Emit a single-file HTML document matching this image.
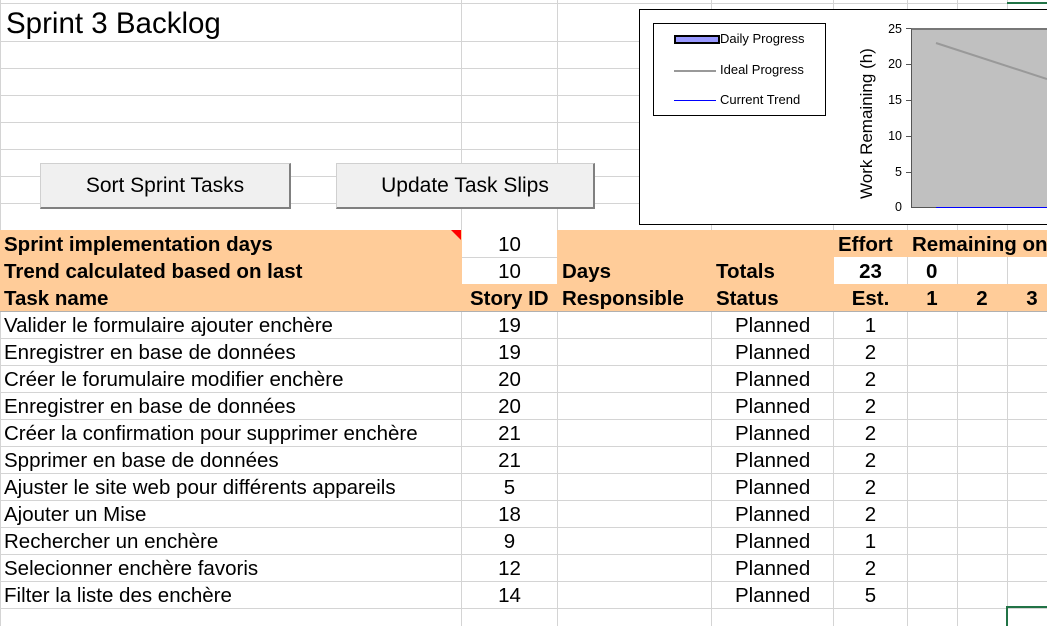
<!DOCTYPE html>
<html><head><meta charset="utf-8"><style>
body{margin:0;width:1047px;height:626px;overflow:hidden;background:#fff;position:relative;font-family:"Liberation Sans",Arial,sans-serif;color:#000}
.h{position:absolute;left:0;width:1047px;height:1px;background:#d4d4d4}
.v{position:absolute;top:0;width:1px;height:626px;background:#d4d4d4}
.a{position:absolute;white-space:nowrap}
.t{font-size:20.5px;line-height:28px;height:27px}
.b{font-weight:bold}
.c{text-align:center}
.btn{position:absolute;background:#f0f0f0;border:1px solid #d0d0d0;border-right:2px solid #808080;border-bottom:2px solid #808080;font-size:21px;text-align:center;line-height:44px;box-sizing:border-box}
</style></head><body>
<div class="h" style="top:3px"></div>
<div class="h" style="top:41px"></div><div class="h" style="top:68px"></div><div class="h" style="top:95px"></div><div class="h" style="top:122px"></div><div class="h" style="top:149px"></div><div class="h" style="top:176px"></div><div class="h" style="top:203px"></div>
<div class="v" style="left:0"></div><div class="v" style="left:461px"></div><div class="v" style="left:557px"></div><div class="v" style="left:711px"></div><div class="v" style="left:833px"></div><div class="v" style="left:907px"></div><div class="v" style="left:957px"></div><div class="v" style="left:1007px"></div>
<div class="h" style="top:338px"></div><div class="h" style="top:365px"></div><div class="h" style="top:392px"></div><div class="h" style="top:419px"></div><div class="h" style="top:446px"></div><div class="h" style="top:473px"></div><div class="h" style="top:500px"></div><div class="h" style="top:527px"></div><div class="h" style="top:554px"></div><div class="h" style="top:581px"></div><div class="h" style="top:608px"></div>
<div style="position:absolute;left:1007px;top:2px;width:40px;height:2px;background:#217346"></div>
<div style="position:absolute;left:1006px;top:606px;width:41px;height:20px;border-left:2px solid #217346;border-top:2px solid #217346;box-sizing:border-box"></div>

<div class="a" style="left:6px;top:5px;font-size:29.5px;line-height:38px">Sprint 3 Backlog</div>
<div class="btn" style="left:40px;top:163px;width:251px;height:46px">Sort Sprint Tasks</div>
<div class="btn" style="left:336px;top:163px;width:259px;height:46px">Update Task Slips</div>

<div style="position:absolute;left:639px;top:9px;width:420px;height:216px;border:1px solid #000;background:#fff;box-sizing:border-box"></div>
<div style="position:absolute;left:653px;top:23px;width:173px;height:93px;border:1px solid #000;box-sizing:border-box;font-size:13px">
 <div style="position:absolute;left:20px;top:11px;width:42px;height:5px;background:#9999ff;border:2px solid #000;box-sizing:content-box"></div>
 <div class="a" style="left:66px;top:7px">Daily Progress</div>
 <div style="position:absolute;left:20px;top:46px;width:42px;height:2px;background:#999"></div>
 <div class="a" style="left:66px;top:38px">Ideal Progress</div>
 <div style="position:absolute;left:20px;top:76px;width:42px;height:1px;background:#0000ff"></div>
 <div class="a" style="left:66px;top:68px">Current Trend</div>
</div>
<div class="a" style="left:857px;top:199px;font-size:17px;line-height:20px;transform:rotate(-90deg);transform-origin:0 0">Work Remaining (h)</div>
<div style="position:absolute;left:911px;top:28px;width:140px;height:179px;background:#c0c0c0;border-left:1px solid #555;border-top:2px solid #777;box-sizing:border-box"></div>
<div style="position:absolute;left:911px;top:207px;width:140px;height:1px;background:#555"></div>
<div style="position:absolute;left:936px;top:207px;width:111px;height:1px;background:#00f"></div>
<svg style="position:absolute;left:0;top:0" width="1047" height="626"><line x1="936" y1="43" x2="1047" y2="79" stroke="#999" stroke-width="2"/></svg>
<div style="font-size:12.5px;line-height:14px">
<div class="a" style="left:880px;top:22px;width:22px;text-align:right">25</div>
<div class="a" style="left:880px;top:57px;width:22px;text-align:right">20</div>
<div class="a" style="left:880px;top:93px;width:22px;text-align:right">15</div>
<div class="a" style="left:880px;top:129px;width:22px;text-align:right">10</div>
<div class="a" style="left:880px;top:165px;width:22px;text-align:right">5</div>
<div class="a" style="left:880px;top:200px;width:22px;text-align:right">0</div>
</div>
<div style="position:absolute;left:906px;top:28px;width:5px;height:1px;background:#555"></div>
<div style="position:absolute;left:906px;top:64px;width:5px;height:1px;background:#555"></div>
<div style="position:absolute;left:906px;top:100px;width:5px;height:1px;background:#555"></div>
<div style="position:absolute;left:906px;top:136px;width:5px;height:1px;background:#555"></div>
<div style="position:absolute;left:906px;top:172px;width:5px;height:1px;background:#555"></div>

<div style="position:absolute;left:0;top:230px;width:1047px;height:81px;background:#ffcc99"></div>
<div style="position:absolute;left:0;top:311px;width:1047px;height:1px;background:#b0b0b0"></div>
<div style="position:absolute;left:462px;top:230px;width:95px;height:54px;background:#fff"></div>
<div style="position:absolute;left:462px;top:257px;width:95px;height:1px;background:#d4d4d4"></div>
<div style="position:absolute;left:834px;top:257px;width:213px;height:27px;background:#fff"></div>
<div style="position:absolute;left:907px;top:257px;width:1px;height:27px;background:#d4d4d4"></div>
<div style="position:absolute;left:957px;top:257px;width:1px;height:27px;background:#d4d4d4"></div>
<div style="position:absolute;left:1007px;top:257px;width:1px;height:27px;background:#d4d4d4"></div>
<svg style="position:absolute;left:451px;top:230px" width="10" height="10"><polygon points="0,0 10,0 10,10" fill="#f00"/></svg>

<div class="a t b" style="left:4px;top:231px">Sprint implementation days</div>
<div class="a t c" style="left:462px;top:231px;width:95px">10</div>
<div class="a t b" style="left:838px;top:231px">Effort</div>
<div class="a t b" style="left:912px;top:231px">Remaining on</div>
<div class="a t b" style="left:4px;top:258px">Trend calculated based on last</div>
<div class="a t c" style="left:462px;top:258px;width:95px">10</div>
<div class="a t b" style="left:562px;top:258px">Days</div>
<div class="a t b" style="left:716px;top:258px">Totals</div>
<div class="a t b c" style="left:834px;top:258px;width:73px">23</div>
<div class="a t b" style="left:926px;top:258px">0</div>
<div class="a t b" style="left:4px;top:285px">Task name</div>
<div class="a t b" style="left:470px;top:285px">Story ID</div>
<div class="a t b" style="left:562px;top:285px">Responsible</div>
<div class="a t b" style="left:716px;top:285px">Status</div>
<div class="a t b c" style="left:834px;top:285px;width:73px">Est.</div>
<div class="a t b c" style="left:907px;top:285px;width:50px">1</div>
<div class="a t b c" style="left:957px;top:285px;width:50px">2</div>
<div class="a t b c" style="left:1007px;top:285px;width:50px">3</div>

<div class="a t" style="left:4px;top:312px">Valider le formulaire ajouter enchère</div><div class="a t c" style="left:462px;top:312px;width:95px">19</div><div class="a t" style="left:735px;top:312px">Planned</div><div class="a t c" style="left:834px;top:312px;width:73px">1</div>
<div class="a t" style="left:4px;top:339px">Enregistrer en base de données</div><div class="a t c" style="left:462px;top:339px;width:95px">19</div><div class="a t" style="left:735px;top:339px">Planned</div><div class="a t c" style="left:834px;top:339px;width:73px">2</div>
<div class="a t" style="left:4px;top:366px">Créer le forumulaire modifier enchère</div><div class="a t c" style="left:462px;top:366px;width:95px">20</div><div class="a t" style="left:735px;top:366px">Planned</div><div class="a t c" style="left:834px;top:366px;width:73px">2</div>
<div class="a t" style="left:4px;top:393px">Enregistrer en base de données</div><div class="a t c" style="left:462px;top:393px;width:95px">20</div><div class="a t" style="left:735px;top:393px">Planned</div><div class="a t c" style="left:834px;top:393px;width:73px">2</div>
<div class="a t" style="left:4px;top:420px">Créer la confirmation pour supprimer enchère</div><div class="a t c" style="left:462px;top:420px;width:95px">21</div><div class="a t" style="left:735px;top:420px">Planned</div><div class="a t c" style="left:834px;top:420px;width:73px">2</div>
<div class="a t" style="left:4px;top:447px">Spprimer en base de données</div><div class="a t c" style="left:462px;top:447px;width:95px">21</div><div class="a t" style="left:735px;top:447px">Planned</div><div class="a t c" style="left:834px;top:447px;width:73px">2</div>
<div class="a t" style="left:4px;top:474px">Ajuster le site web pour différents appareils</div><div class="a t c" style="left:462px;top:474px;width:95px">5</div><div class="a t" style="left:735px;top:474px">Planned</div><div class="a t c" style="left:834px;top:474px;width:73px">2</div>
<div class="a t" style="left:4px;top:501px">Ajouter un Mise</div><div class="a t c" style="left:462px;top:501px;width:95px">18</div><div class="a t" style="left:735px;top:501px">Planned</div><div class="a t c" style="left:834px;top:501px;width:73px">2</div>
<div class="a t" style="left:4px;top:528px">Rechercher un enchère</div><div class="a t c" style="left:462px;top:528px;width:95px">9</div><div class="a t" style="left:735px;top:528px">Planned</div><div class="a t c" style="left:834px;top:528px;width:73px">1</div>
<div class="a t" style="left:4px;top:555px">Selecionner enchère favoris</div><div class="a t c" style="left:462px;top:555px;width:95px">12</div><div class="a t" style="left:735px;top:555px">Planned</div><div class="a t c" style="left:834px;top:555px;width:73px">2</div>
<div class="a t" style="left:4px;top:582px">Filter la liste des enchère</div><div class="a t c" style="left:462px;top:582px;width:95px">14</div><div class="a t" style="left:735px;top:582px">Planned</div><div class="a t c" style="left:834px;top:582px;width:73px">5</div>
</body></html>
